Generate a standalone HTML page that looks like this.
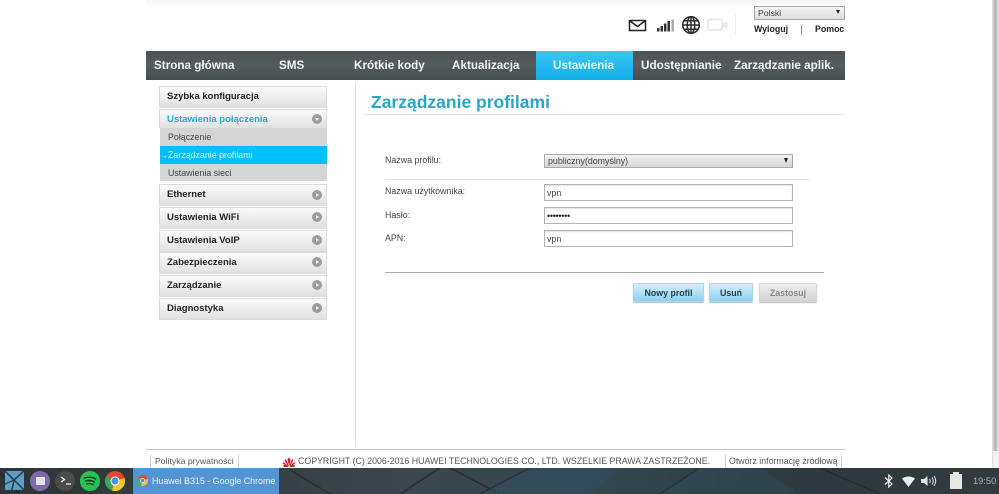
<!DOCTYPE html>
<html lang="pl">
<head>
<meta charset="utf-8">
<title>Huawei B315</title>
<style>
html,body{margin:0;padding:0;width:999px;height:494px;overflow:hidden;background:#fff;font-family:"Liberation Sans",sans-serif;}
.a{position:absolute;white-space:nowrap;}
#nav{position:absolute;left:146px;top:51px;width:699px;height:29px;background:linear-gradient(#4b5355,#555c5e 50%,#454c4e);}
.n{position:absolute;top:51px;height:29px;line-height:29px;color:#f4f4f4;font-weight:bold;font-size:11.7px;white-space:nowrap;}
.m{position:absolute;left:159px;width:166px;height:20px;line-height:20px;border:1px solid #dcdcdc;box-sizing:content-box;background:linear-gradient(#fbfbfb,#e0e0e0);font-weight:bold;font-size:9.5px;color:#222;text-indent:7px;}
.ar{position:absolute;left:312px;width:10px;height:10px;border-radius:50%;background:#9c9c9c;}
.ar:after{content:"";position:absolute;left:4px;top:2.5px;border-left:3px solid #fff;border-top:2.5px solid transparent;border-bottom:2.5px solid transparent;}
.ar.d:after{left:2.5px;top:4px;border-top:3px solid #fff;border-left:2.5px solid transparent;border-right:2.5px solid transparent;border-bottom:0;}
.s{position:absolute;left:160px;width:167px;height:18px;line-height:19px;background:#d5d5d5;color:#444;font-size:8.85px;text-indent:8px;}
.l{position:absolute;left:385px;font-size:8.85px;line-height:11px;color:#444;white-space:nowrap;}
.i{position:absolute;left:544px;width:247px;height:15px;border:1px solid #b4b4b4;background:#fff;font-size:8.85px;color:#444;line-height:16px;text-indent:2px;box-shadow:inset 0 1px 1px #e4e4e4;}
.b{position:absolute;top:283px;height:19px;line-height:18px;text-align:center;font-size:8.8px;font-weight:bold;box-sizing:border-box;border-radius:1px;}
.bl{background:linear-gradient(#d4effc,#8fd2f3);border:1px solid #a6d8ee;color:#1f3a52;box-shadow:0 1px 1px #bbb;}
.f{position:absolute;top:456px;font-size:8.8px;color:#555;white-space:nowrap;line-height:11px;}
.sep{position:absolute;top:455px;width:1px;height:12px;background:#ccc;}
#bar{position:absolute;left:0;top:468px;width:999px;height:26px;background:linear-gradient(100deg,#2e3436,#3b474c 40%,#34474f 60%,#2d3a40 80%,#333a3d);overflow:hidden;}
</style>
</head>
<body>
<!-- scrollbar -->
<div style="position:absolute;left:992px;top:0;width:7px;height:451px;background:linear-gradient(90deg,#e8e8e8,#b4b4b4 40%,#c8c8c8 70%,#ececec);"></div>
<div style="position:absolute;left:992px;top:451px;width:7px;height:17px;background:#f2f2f2;border-left:1px solid #ddd;box-sizing:border-box;"></div>
<div style="position:absolute;left:146px;top:0;width:699px;height:9px;background:linear-gradient(#f6f6f6,#fff);"></div>

<!-- header icons -->
<svg class="a" style="left:628px;top:18px" width="20" height="15" viewBox="0 0 20 15"><rect x="1.500" y="2.500" width="16" height="10" fill="#fff" stroke="#222" stroke-width="1.500"/><path d="M2 3 L9.500 8.500 L17 3" fill="none" stroke="#222" stroke-width="1.500"/></svg>
<svg class="a" style="left:656px;top:17px" width="20" height="16" viewBox="0 0 20 16"><rect x="1" y="11" width="2.500" height="3.500" fill="#333"/><rect x="4.500" y="9" width="2.500" height="5.500" fill="#333"/><rect x="8" y="6.500" width="2.500" height="8" fill="#333"/><rect x="11.500" y="4" width="2.500" height="10.500" fill="#333"/><rect x="15.500" y="2.500" width="2.500" height="12" fill="#aaa"/></svg>
<svg class="a" style="left:681px;top:15px" width="20" height="20" viewBox="0 0 20 20"><g fill="none" stroke="#2a2a2a" stroke-width="1.500"><circle cx="10" cy="10" r="8.300"/><ellipse cx="10" cy="10" rx="3.800" ry="8.300"/><path d="M10 1.700V18.300M1.700 10H18.300M3 5.700H17M3 14.300H17"/></g></svg>
<svg class="a" style="left:707px;top:18px" width="22" height="14" viewBox="0 0 22 14"><rect x="1" y="1.500" width="14" height="10.500" rx="1.500" fill="#fff" stroke="#e4e8ea" stroke-width="1.800"/><path d="M16 5.500L20.500 2.500V11L16 8.500Z" fill="#e6eaec"/></svg>
<div class="a" style="left:735px;top:13px;width:1px;height:21px;background:#eee;"></div>

<!-- language select -->
<div class="a" style="left:754px;top:6px;width:89px;height:12px;border:1px solid #aaa;box-sizing:content-box;background:linear-gradient(#f6f6f6,#dcdcdc);"></div>
<div class="a" style="left:758px;top:7px;font-size:8.700px;line-height:12px;color:#444;">Polski</div>
<div class="a" style="left:836px;top:10px;border-top:4px solid #222;border-left:2.500px solid transparent;border-right:2.500px solid transparent;"></div>
<div class="a" style="left:754px;top:24px;font-size:8.800px;font-weight:bold;color:#222;line-height:11px;">Wyloguj</div>
<div class="a" style="left:801px;top:25px;width:1px;height:10px;background:#888;"></div>
<div class="a" style="left:815px;top:24px;font-size:8.800px;font-weight:bold;color:#222;line-height:11px;">Pomoc</div>

<!-- nav -->
<div id="nav"></div>
<div class="a" style="left:536px;top:51px;width:97px;height:29px;background:linear-gradient(#3cc6f4,#11aee8);"></div>
<div class="n" style="left:154px;">Strona główna</div>
<div class="n" style="left:279px;">SMS</div>
<div class="n" style="left:354px;">Krótkie kody</div>
<div class="n" style="left:452px;">Aktualizacja</div>
<div class="n" style="left:553px;color:#eaf8ff;">Ustawienia</div>
<div class="n" style="left:641px;">Udostępnianie</div>
<div class="n" style="left:734px;">Zarządzanie aplik.</div>

<!-- sidebar -->
<div class="m" style="top:86px;">Szybka konfiguracja</div>
<div class="m" style="top:109px;height:18px;border-bottom:0;color:#2ea6cf;">Ustawienia połączenia</div>
<div class="ar d" style="top:114px;"></div>
<div class="s" style="top:128px;">Połączenie</div>
<div class="a" style="left:160px;top:146px;width:167px;height:18px;background:#00bfff;color:#e4f8ff;font-size:8.850px;line-height:19px;"><span style="font-size:8px;">→</span><span style="position:absolute;left:8px;top:0;">Zarządzanie profilami</span></div>
<div class="s" style="top:164px;height:17px;">Ustawienia sieci</div>
<div class="m" style="top:184px;">Ethernet</div><div class="ar" style="top:190px;"></div>
<div class="m" style="top:207px;">Ustawienia WiFi</div><div class="ar" style="top:212px;"></div>
<div class="m" style="top:230px;">Ustawienia VoIP</div><div class="ar" style="top:235px;"></div>
<div class="m" style="top:252px;">Zabezpieczenia</div><div class="ar" style="top:257px;"></div>
<div class="m" style="top:275px;">Zarządzanie</div><div class="ar" style="top:280px;"></div>
<div class="m" style="top:298px;">Diagnostyka</div><div class="ar" style="top:303px;"></div>

<div class="a" style="left:355px;top:83px;width:1px;height:364px;background:#dedede;"></div>

<!-- main -->
<div class="a" style="left:371px;top:91px;font-size:17.500px;font-weight:bold;color:#2ba4ca;line-height:23px;">Zarządzanie profilami</div>
<div class="a" style="left:364px;top:114px;width:481px;height:1px;background:#e6e6e6;"></div>

<div class="l" style="top:155px;">Nazwa profilu:</div>
<div class="a" style="left:544px;top:154px;width:247px;height:12px;border:1px solid #aaa;background:linear-gradient(#f2f2f2,#d6d6d6);font-size:8.850px;line-height:13px;color:#444;text-indent:3px;">publiczny(domyślny)</div>
<div class="a" style="left:784px;top:158px;border-top:5px solid #222;border-left:2.500px solid transparent;border-right:2.500px solid transparent;"></div>
<div class="a" style="left:385px;top:179px;width:424px;height:1px;background:#e2e2e2;"></div>
<div class="l" style="top:186px;">Nazwa użytkownika:</div>
<div class="i" style="top:184px;">vpn</div>
<div class="l" style="top:210px;">Hasło:</div>
<div class="i" style="top:207px;font-size:9px;letter-spacing:-.3px;color:#222;">••••••••</div>
<div class="l" style="top:233px;">APN:</div>
<div class="i" style="top:230px;">vpn</div>
<div class="a" style="left:385px;top:272px;width:439px;height:1px;background:#aaa;"></div>

<div class="b bl" style="left:633px;width:71px;">Nowy profil</div>
<div class="b bl" style="left:709px;width:44px;">Usuń</div>
<div class="b" style="left:759px;width:58px;background:linear-gradient(#eee,#d4d4d4);border:1px solid #d8d8d8;color:#8a8a8a;box-shadow:0 1px 1px #bbb;">Zastosuj</div>

<!-- footer -->
<div class="a" style="left:146px;top:449px;width:699px;height:1px;background:#c8c8c8;"></div>
<div class="sep" style="left:150px;"></div>
<div class="f" style="left:155px;font-size:8.700px;">Polityka prywatności</div>
<div class="sep" style="left:238px;"></div>
<svg class="a" style="left:282px;top:456px" width="14" height="12" viewBox="0 0 14 12"><g fill="#d21f26"><path d="M7 11L5.500 3.500 6.500 1.500 7 3Z"/><path d="M7 11L8.500 3.500 7.500 1.500 7 3Z"/><path d="M6.500 11L2.500 4.500 3.500 3 5.500 6Z"/><path d="M7.500 11L11.500 4.500 10.500 3 8.500 6Z"/><path d="M6 11L.8 7.500 1.200 6 4 8Z"/><path d="M8 11L13.200 7.500 12.800 6 10 8Z"/><path d="M1 9H5.500L6 11H2Z"/><path d="M13 9H8.500L8 11H12Z"/></g></svg>
<div class="f" style="left:298px;">COPYRIGHT (C) 2006-2016 HUAWEI TECHNOLOGIES CO., LTD. WSZELKIE PRAWA ZASTRZEŻONE.</div>
<div class="sep" style="left:725px;"></div>
<div class="f" style="left:729px;">Otwórz informację źródłową</div>
<div class="sep" style="left:841px;"></div>

<!-- taskbar -->
<div id="bar">
<svg style="position:absolute;left:0;top:0" width="999" height="26" viewBox="0 0 999 26"><g fill="none" stroke="#23282a" stroke-width="1.500" opacity=".8"><path d="M290 2L330 26M440 0L400 26M450 0L500 26M530 0L480 26M700 0L660 26M820 0L880 26M0 5L20 26"/></g><path d="M480 26L530 0H620L590 26Z" fill="#2f4f63" opacity=".45"/><path d="M660 26L700 0H760L800 26Z" fill="#315260" opacity=".35"/></svg>
<div style="position:absolute;left:133px;top:0;width:146px;height:26px;background:#5394d4;"></div>
<!-- launcher tile -->
<svg style="position:absolute;left:5px;top:3px" width="19" height="19" viewBox="0 0 19 19"><rect width="19" height="19" fill="#5d9ec4"/><path d="M0 0L19 19M19 0L9 9 7 19" stroke="#253a4a" stroke-width="1.500" fill="none"/><path d="M9 9L0 13" stroke="#253a4a" stroke-width="1.200"/></svg>
<!-- files -->
<div style="position:absolute;left:30px;top:3px;width:20px;height:20px;border-radius:50%;background:#7d6ba8;"></div>
<div style="position:absolute;left:36px;top:9px;width:9px;height:8px;background:#e6e0ee;border-radius:1px;"></div>
<!-- terminal -->
<div style="position:absolute;left:55px;top:3px;width:20px;height:20px;border-radius:50%;background:#4b4b48;"></div>
<svg style="position:absolute;left:60px;top:8px" width="12" height="10" viewBox="0 0 12 10"><path d="M1 1L4.500 3.500 1 6" fill="none" stroke="#eee" stroke-width="1.300"/><path d="M6 8H11" stroke="#eee" stroke-width="1.300"/></svg>
<!-- spotify -->
<div style="position:absolute;left:80px;top:3px;width:20px;height:20px;border-radius:50%;background:#25c455;"></div>
<svg style="position:absolute;left:83px;top:7px" width="14" height="12" viewBox="0 0 14 12"><g fill="none" stroke="#1b3a22" stroke-linecap="round"><path d="M1.500 3C5 2 9.500 2 12.500 4" stroke-width="1.600"/><path d="M2.500 6C5.500 5.200 9 5.500 11.500 7" stroke-width="1.400"/><path d="M3.500 9C6 8.400 8.500 8.600 10.500 9.800" stroke-width="1.200"/></g></svg>
<!-- chrome -->
<svg style="position:absolute;left:105px;top:3px" width="20" height="20" viewBox="0 0 20 20"><circle cx="10" cy="10" r="10" fill="#e2492f"/><path d="M10 10L1.300 5A10 10 0 0 0 7 19.500Z" fill="#34a853"/><path d="M10 10L19.500 7A10 10 0 0 1 7 19.500Z" fill="#f6c52a"/><circle cx="10" cy="10" r="4.600" fill="#fff"/><circle cx="10" cy="10" r="3.500" fill="#4a8ff0"/></svg>
<!-- small chrome in task -->
<svg style="position:absolute;left:137px;top:7px" width="11" height="11" viewBox="0 0 20 20"><circle cx="10" cy="10" r="10" fill="#e2492f"/><path d="M10 10L1.300 5A10 10 0 0 0 7 19.500Z" fill="#4caf50"/><path d="M10 10L19.500 7A10 10 0 0 1 7 19.500Z" fill="#f6c52a"/><circle cx="10" cy="10" r="4.600" fill="#fff"/><circle cx="10" cy="10" r="3.500" fill="#4a8ff0"/></svg>
<div style="position:absolute;left:152px;top:0;line-height:27px;font-size:8.900px;color:#eef5fb;white-space:nowrap;">Huawei B315 - Google Chrome</div>
<!-- status -->
<svg style="position:absolute;left:884px;top:6px" width="10" height="14" viewBox="0 0 10 14"><path d="M1 3.500L8 10 4.800 13V1L8 4 1 10.500" fill="none" stroke="#f0f0f0" stroke-width="1.200"/></svg>
<svg style="position:absolute;left:902px;top:8px" width="13" height="11" viewBox="0 0 13 11"><path d="M0 2.500Q6.500 -1.500 13 2.500L6.500 11Z" fill="#e8eef0"/></svg>
<svg style="position:absolute;left:921px;top:7px" width="16" height="12" viewBox="0 0 16 12"><path d="M0 4H3L6.500 1V11L3 8H0Z" fill="#e8e8e8"/><path d="M8.500 4Q10 6 8.500 8M11 2.500Q13.500 6 11 9.500M13 1Q16.500 6 13 11" fill="none" stroke="#e8e8e8" stroke-width="1"/></svg>
<div style="position:absolute;left:950px;top:6px;width:12px;height:15px;background:#e8e8e2;"></div>
<div style="position:absolute;left:953px;top:4px;width:6px;height:2px;background:#e8e8e2;"></div>
<div style="position:absolute;left:973px;top:0;line-height:27px;font-size:9.300px;color:#a8b4b8;">19:50</div>
</div>
</body>
</html>
